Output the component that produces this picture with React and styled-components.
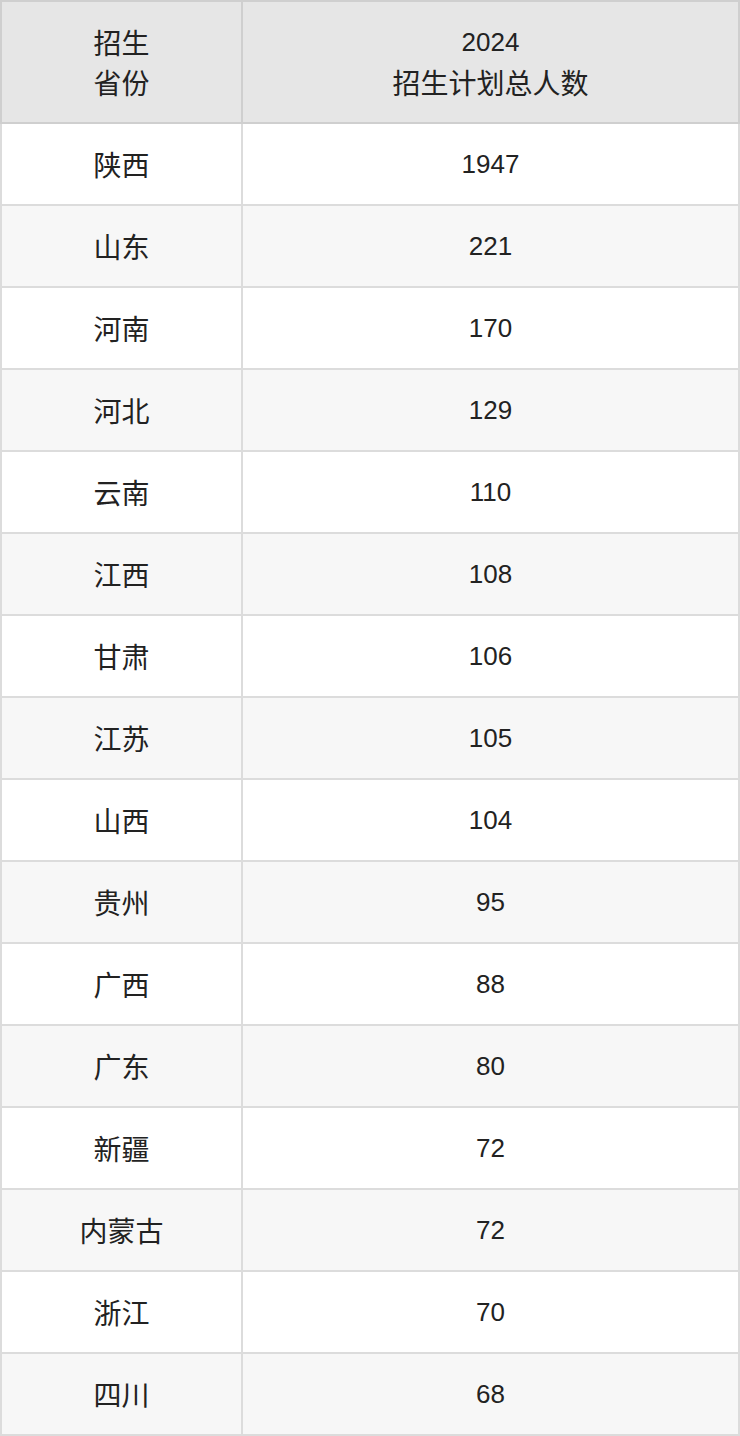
import React from "react";
import styled, { createGlobalStyle } from "styled-components";

const Global = createGlobalStyle`
  html, body { margin: 0; padding: 0; background: #fff; }
  * { box-sizing: border-box; }
`;

const Table = styled.div`
  width: 740px;
  font-family: "Liberation Sans", "Noto Sans CJK SC", sans-serif;
  font-size: 26px;
  color: #222;
`;

const Row = styled.div`
  display: grid;
  grid-template-columns: 243px 497px;
  background: ${(p) => (p.$head ? "#e6e6e6" : p.$alt ? "#f7f7f7" : "#fff")};
`;

const Cell = styled.div`
  display: flex;
  flex-direction: column;
  align-items: center;
  justify-content: center;
  text-align: center;
  line-height: 40px;
  height: ${(p) => (p.$head ? "124px" : "82px")};
  border-right: 2px solid ${(p) => (p.$head ? "#cfcfcf" : "#dcdcdc")};
  border-bottom: 2px solid ${(p) => (p.$head ? "#cfcfcf" : "#dcdcdc")};
  border-top: ${(p) => (p.$head ? "2px solid #cfcfcf" : "none")};
  border-left: ${(p) =>
    p.$first ? `2px solid ${p.$head ? "#cfcfcf" : "#dcdcdc"}` : "none"};
`;

const Han = styled.span`
  font-family: "Noto Sans CJK SC", sans-serif;
  font-size: 28px;
  line-height: 40px;
`;

const Num = styled.span`
  line-height: 40px;
`;

const data = [
  ["陕西", 1947],
  ["山东", 221],
  ["河南", 170],
  ["河北", 129],
  ["云南", 110],
  ["江西", 108],
  ["甘肃", 106],
  ["江苏", 105],
  ["山西", 104],
  ["贵州", 95],
  ["广西", 88],
  ["广东", 80],
  ["新疆", 72],
  ["内蒙古", 72],
  ["浙江", 70],
  ["四川", 68],
];

export default function App() {
  return (
    <>
      <Global />
      <Table>
        <Row $head>
          <Cell $head $first>
            <Han>招生</Han>
            <Han>省份</Han>
          </Cell>
          <Cell $head>
            <Num>2024</Num>
            <Han>招生计划总人数</Han>
          </Cell>
        </Row>
        {data.map(([p, n], i) => (
          <Row key={p} $alt={i % 2 === 1}>
            <Cell $first>
              <Han>{p}</Han>
            </Cell>
            <Cell>
              <Num>{n}</Num>
            </Cell>
          </Row>
        ))}
      </Table>
    </>
  );
}
